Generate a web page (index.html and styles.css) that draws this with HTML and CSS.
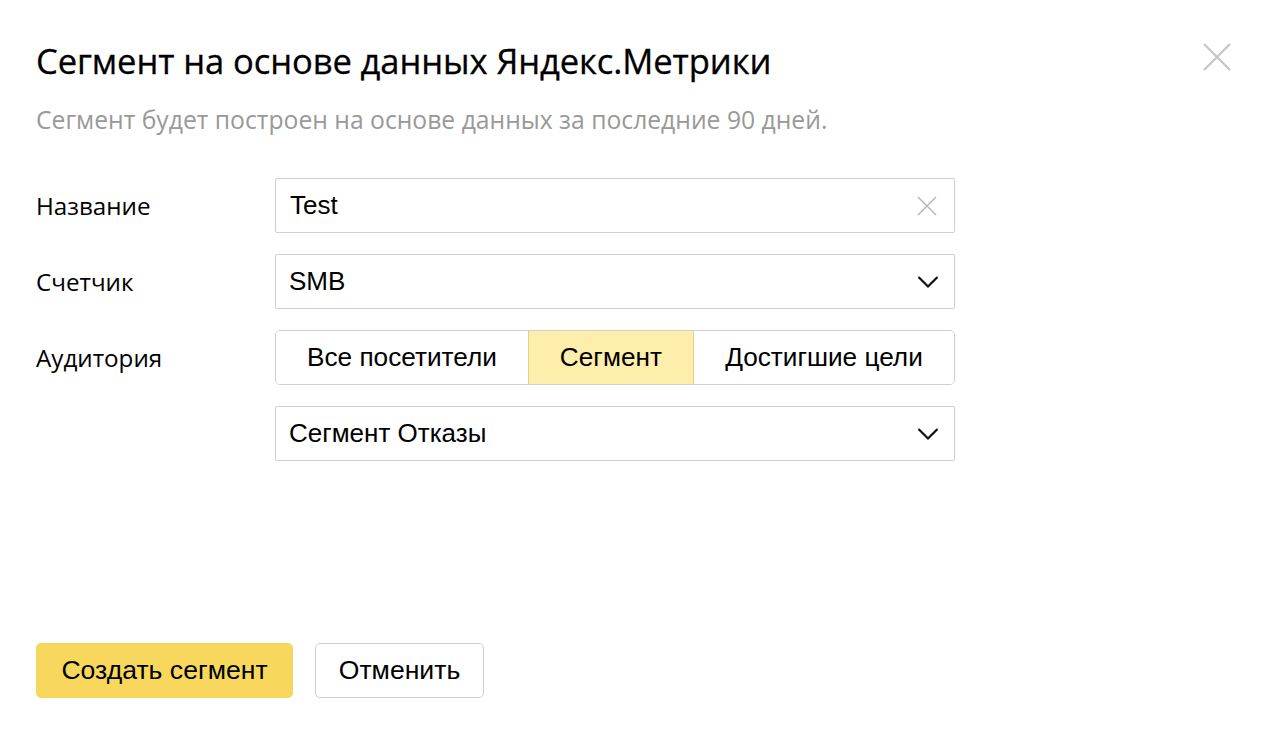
FILE: index.html
```html
<!DOCTYPE html>
<html>
<head>
<meta charset="utf-8">
<title>Сегмент на основе данных Яндекс.Метрики</title>
<link rel="stylesheet" href="styles.css">
</head>
<body>
<div class="dialog">
  <button class="close" type="button" title="Закрыть">
    <svg width="28" height="28" viewBox="0 0 28 28"><path d="M1 1L27 27M27 1L1 27" stroke="#c8c8c8" stroke-width="2.4" fill="none"/></svg>
  </button>
  <h1 class="title">Сегмент на основе данных Яндекс.Метрики</h1>
  <p class="hint">Сегмент будет построен на основе данных за последние 90 дней.</p>

  <form class="form">
    <label class="key" for="name">Название</label>
    <div class="field">
      <input id="name" type="text" value="Test">
      <span class="clear">
        <svg width="20" height="20" viewBox="0 0 20 20"><path d="M1 1L19 19M19 1L1 19" stroke="#b4b4b4" stroke-width="1.4" fill="none"/></svg>
      </span>
    </div>

    <span class="key">Счетчик</span>
    <div class="field select">
      <span class="value">SMB</span>
      <svg class="arrow" width="22" height="14" viewBox="0 0 22 14"><path d="M1.5 2L11 11.5L20.5 2" stroke="#111" stroke-width="2.2" fill="none"/></svg>
    </div>

    <span class="key">Аудитория</span>
    <div class="tabs">
      <button type="button" class="tab">Все посетители</button>
      <button type="button" class="tab on">Сегмент</button>
      <button type="button" class="tab">Достигшие цели</button>
    </div>

    <span class="key"></span>
    <div class="field select">
      <span class="value">Сегмент Отказы</span>
      <svg class="arrow" width="22" height="14" viewBox="0 0 22 14"><path d="M1.5 2L11 11.5L20.5 2" stroke="#111" stroke-width="2.2" fill="none"/></svg>
    </div>
  </form>

  <div class="actions">
    <button type="button" class="btn primary">Создать сегмент</button>
    <button type="button" class="btn">Отменить</button>
  </div>
</div>
</body>
</html>
```

FILE: styles.css
```css
body { margin: 0; background: #fff; color: #000; font-family: "Open Sans", "Noto Sans", sans-serif; }
.dialog { position: relative; padding: 38px 36px 38px 36px; }
.close { position: absolute; top: 43px; right: 36px; padding: 0; border: 0; background: none; cursor: pointer; }
.close svg { display: block; }
.title { margin: 0; font-size: 34.6px; line-height: 46px; font-weight: 400; letter-spacing: -0.1px; white-space: nowrap; -webkit-text-stroke: 0.3px #000; }
.hint { margin: 21px 0 0; color: #999; font-size: 24.7px; line-height: 30px; white-space: nowrap; }

.form { display: grid; grid-template-columns: 239px 680px; row-gap: 21px; margin-top: 43px; font-family: "Liberation Sans", Arial, sans-serif; }
.key { font-family: "Open Sans", "Noto Sans", sans-serif; font-size: 24.2px; line-height: 55px; }
.field { position: relative; display: flex; align-items: center; height: 55px; box-sizing: border-box; border: 1px solid #cfcfcf; border-radius: 2px; background: #fff; }
.field input { flex: 1; min-width: 0; height: 100%; margin: 0; padding: 0 0 0 14px; border: 0; outline: 0; background: none; font: 26px "Liberation Sans", Arial, sans-serif; color: #000; }
.field .clear { display: flex; margin: 0 17px 0 10px; }
.select { justify-content: space-between; padding: 0 15px 0 13px; }
.select .value { font-size: 26px; }
.select .arrow { display: block; margin-top: 1px; }

.tabs { display: flex; height: 55px; box-sizing: border-box; border: 1px solid #cfcfcf; border-radius: 5px; overflow: hidden; }
.tab { margin: 0; padding: 0 31px; border: 0; border-left: 1px solid #cfcfcf; background: #fff; font: 26.2px "Liberation Sans", Arial, sans-serif; color: #000; white-space: nowrap; }
.tab:first-child { border-left: 0; }
.tab.on { background: #fdeeab; border-left-color: #e3cf85; border-right: 1px solid #e3cf85; }
.tab.on + .tab { border-left: 0; }
.tab:last-child { flex: 1; padding: 0; }

.actions { display: flex; gap: 22px; margin-top: 182px; }
.btn { height: 55px; margin: 0; padding: 0; border: 1px solid #cfcfcf; border-radius: 5px; background: #fff; font: 26.6px "Liberation Sans", Arial, sans-serif; color: #000; }
.btn.primary { width: 257px; border-color: #f4d65e; background: #f8d85c; }
.btn:last-child { width: 169px; }
```
